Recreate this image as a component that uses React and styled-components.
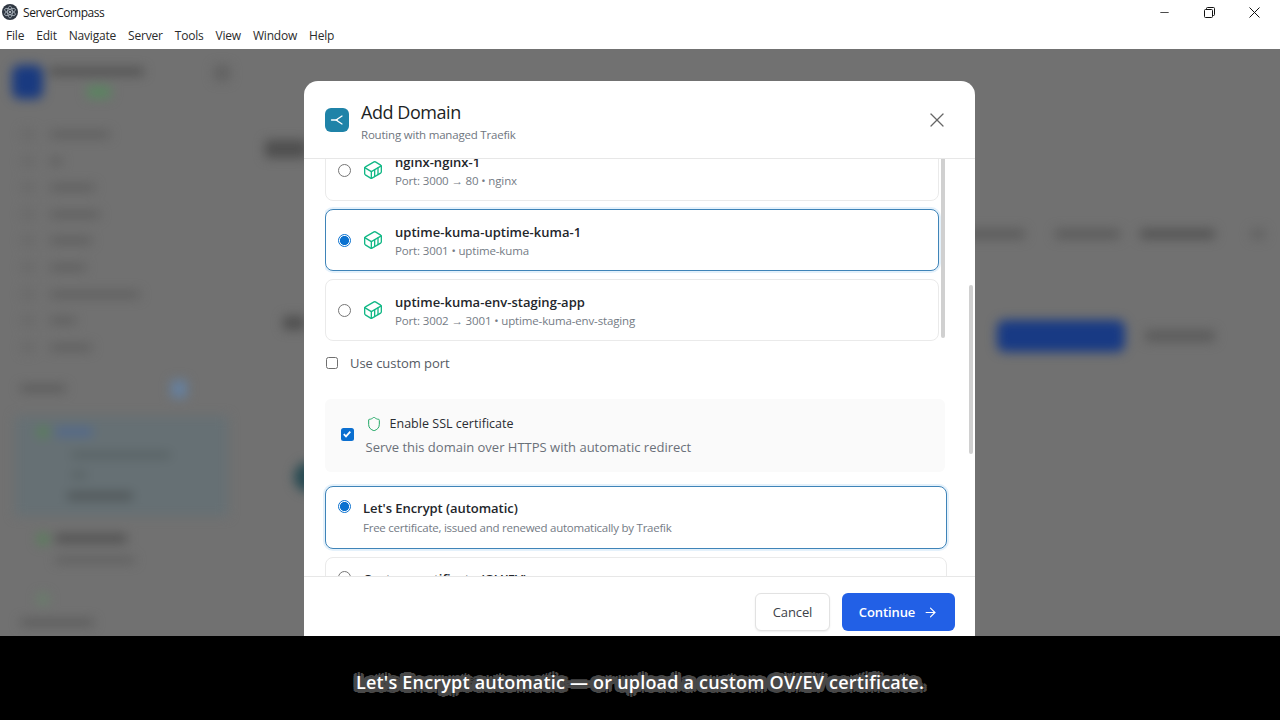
import React from 'react';
import styled, { createGlobalStyle } from 'styled-components';
import { Container, Shield, X, ArrowRight, Minus } from 'lucide-react';

const Global = createGlobalStyle`
  html, body { margin: 0; padding: 0; background: #000; }
  * { box-sizing: border-box; }
  body { font-family: "Open Sans", "Noto Sans", "Liberation Sans", sans-serif; }
`;

const Shell = styled.div`
  width: 1280px; height: 720px; display: flex; flex-direction: column; overflow: hidden; background: #fff;
`;
const TitleBar = styled.div`
  height: 24px; display: flex; align-items: center; padding-left: 2px; background: #fff;
  font-size: 12px; color: #1a1a1a;
`;
const AppName = styled.span`margin-left: 5px; letter-spacing: -.45px;`;
const WindowButtons = styled.div`margin-left: auto; display: flex; align-items: center; height: 24px; padding-right: 3px;`;
const WinBtn = styled.button`
  width: 45px; height: 24px; border: 0; background: none; padding: 0; display: flex; align-items: center; justify-content: center; color: #000;
`;
const MenuBar = styled.div`
  height: 25px; display: flex; align-items: center; padding-left: 6px; gap: 12px; background: #fff;
  font-size: 12px; color: #2b2b2b; letter-spacing: -.2px; padding-bottom: 2px;
`;
const Stage = styled.div`
  position: relative; height: 587px; overflow: hidden; background: #717171;
`;
const Backdrop = styled.div`
  display: flex; height: 100%; filter: blur(5.5px);
`;
const Sidebar = styled.div`
  width: 240px; padding: 16px 10px 0; display: flex; flex-direction: column;
`;
const Profile = styled.div`display: flex; gap: 6px; padding-left: 2px; height: 54px;`;
const Avatar = styled.div`width: 32px; height: 34px; border-radius: 8px; background: #193a80;`;
const ProfileText = styled.div`display: flex; flex-direction: column; gap: 11px; padding-top: 3px; width: 135px;`;
const Bar = styled.div`
  width: ${p => p.$w}px; height: ${p => p.$h || 7}px; border-radius: 3px; background: ${p => p.$c || '#5a5a5a'};
  margin-left: ${p => p.$ml || 0}px; flex: none;
`;
const NavList = styled.div`
  display: flex; flex-direction: column; gap: 15.6px; margin-top: 10px; padding-left: 12px;
`;
const NavRow = styled.div`display: flex; align-items: center; gap: 16px;`;
const SectionRow = styled.div`
  display: flex; align-items: center; margin-top: 27px; padding-left: 10px; gap: 105px;
`;
const ServerActive = styled.div`
  margin: 18px 2px 0 5px; height: 100px; background: #667074; padding: 10px 0 0 22px;
  display: flex; flex-direction: column; gap: 14px;
`;
const ServerRow = styled.div`display: flex; align-items: center; gap: 6px;`;
const Dot = styled.div`width: 12px; height: 12px; border-radius: 50%; background: ${p => p.$c || '#578059'};`;
const ServerOther = styled.div`
  margin: 17px 0 0 27px; display: flex; flex-direction: column; gap: 12px;
`;
const ThirdDot = styled.div`margin: 30px 0 0 27px;`;
const BottomRow = styled.div`margin: 14px 0 0 10px;`;
const MainArea = styled.div`
  flex: 1; padding: 52px 15px 0 22px; display: flex; flex-direction: column;
`;
const PageTitle = styled.div`
  width: 42px; height: 18px; border-radius: 3px; background: #4f4f4f; margin-top: 39px; margin-left: 3px;
`;
const TabsRow = styled.div`
  margin-top: 71px; display: flex; justify-content: flex-end;
`;
const ToolRow = styled.div`
  margin-top: 81px; display: flex; align-items: center; gap: 20px; padding-right: 50px;
`;
const HeadingBlur = styled.div`
  width: 22px; height: 14px; background: #505050; border-radius: 3px; margin: -26px auto 0 21px;
`;
const PrimaryBlur = styled.div`width: 128px; height: 32px; border-radius: 8px; background: #183a84;`;
const TealBlob = styled.div`
  width: 30px; height: 30px; border-radius: 50%; background: #274a52; margin: 110px 0 0 32px;
`;

const Modal = styled.div`
  position: absolute; left: 304px; top: 32px; width: 671px; height: 570px; background: #fff;
  border-radius: 14px 14px 0 0; display: flex; flex-direction: column; overflow: hidden;
`;
const Header = styled.div`
  height: 78px; flex: none; display: flex; align-items: center; padding: 0 26px 0 21px; border-bottom: 1px solid #e7e7e7;
`;
const HeaderIcon = styled.div`
  width: 24px; height: 24px; border-radius: 6px; background: #1f83a8; display: flex; align-items: center; justify-content: center;
`;
const HeaderText = styled.div`margin-left: 12px; display: flex; flex-direction: column; gap: 3px; margin-top: 3px;`;
const Title = styled.div`font-size: 18px; line-height: 24px; font-weight: 500; color: #1d1f24; letter-spacing: -.45px;`;
const Subtitle = styled.div`font-size: 11.5px; line-height: 16px; color: #6f7680; letter-spacing: -.2px;`;
const CloseBtn = styled.button`
  margin-left: auto; border: 0; background: none; padding: 0; color: #666; display: flex;
`;
const Body = styled.div`
  position: relative; flex: 1; overflow: hidden; padding: 0 28px 0 21px;
`;
const ListBox = styled.div`
  position: relative; height: 182px; overflow: hidden; padding-right: 8px;
`;
const List = styled.div`
  margin-top: -20px; display: flex; flex-direction: column; gap: 8px;
`;
const Card = styled.div`
  height: ${p => p.$h || 62}px; flex: none; border-radius: 8px; background: #fff; display: flex; align-items: center;
  padding-left: 12px;
  border: 1px solid ${p => (p.$on ? '#3f84b8' : '#eaeaea')};
  box-shadow: ${p => (p.$on ? '0 0 0 2px #e4f1fb' : 'none')};
`;
const Radio = styled.span`
  width: 13px; height: 13px; border-radius: 50%; flex: none; display: block; background: #fff;
  border: 1px solid ${p => (p.$on ? '#0b72d0' : '#767676')};
  ${p => p.$on && 'background: radial-gradient(circle, #0b72d0 0 4.3px, #fff 4.8px);'}
`;
const IconSlot = styled.span`display: flex; margin-left: 12px; color: #12b886;`;
const CardText = styled.div`margin-left: 12px; display: flex; flex-direction: column; gap: 3px; margin-top: 2px;`;
const CardTitle = styled.div`font-size: 13px; line-height: 16px; font-weight: 600; color: #23262b; letter-spacing: .03px;`;
const CardSub = styled.div`font-size: 11.5px; line-height: 16px; color: #747b85; letter-spacing: -.14px;`;
const ListThumb = styled.div`
  position: absolute; right: 2px; top: 0; bottom: 3px; width: 4px; background: #d0d0d0; border-radius: 0 0 2px 2px;
`;
const CustomPort = styled.label`
  display: flex; align-items: center; margin-top: 13px; height: 17px; font-size: 13px; color: #555b64; letter-spacing: -.05px;
`;
const Check = styled.span`
  width: ${p => p.$s || 12}px; height: ${p => p.$s || 12}px; border-radius: 2.5px; flex: none; display: flex; align-items: center; justify-content: center;
  border: ${p => (p.$on ? '0' : '1px solid #6f6f6f')}; background: ${p => (p.$on ? '#0b6fd0' : '#fff')}; margin-left: ${p => p.$ml || 1}px;
`;
const PortLabel = styled.span`margin-left: 12px;`;
const SslBlock = styled.div`
  margin-top: 28px; height: 73px; background: #fafafa; border-radius: 6px; display: flex; align-items: center; padding-left: 15px; width: 620px;
`;
const SslCheckWrap = styled.div`display: flex; margin-top: -3px;`;
const SslText = styled.div`margin: -1px 0 0 12px; display: flex; flex-direction: column; gap: 7px;`;
const SslHead = styled.div`
  display: flex; align-items: center; font-size: 12.5px; line-height: 16px; font-weight: 500; color: #2a2d33; letter-spacing: .02px;
`;
const ShieldSlot = styled.span`display: flex; color: #22a866; margin-right: 8px;`;
const SslDesc = styled.div`font-size: 13px; line-height: 16px; color: #6a7079; letter-spacing: 0;`;
const CertCard = styled(Card)`
  width: 622px; align-items: flex-start; padding: 13px 0 0 12px; margin-top: ${p => p.$mt}px;
`;
const CertText = styled.div`margin-left: 12px; display: flex; flex-direction: column; gap: 4px;`;
const CertTitle = styled.div`font-size: 13px; line-height: 16px; font-weight: 600; color: #23262b; letter-spacing: -.05px;`;
const CertSub = styled(CardSub)`letter-spacing: -.25px;`;
const PageThumb = styled.div`
  position: absolute; right: 2px; top: 126px; width: 4px; height: 169px; background: #d0d0d0; border-radius: 2px;
`;
const Footer = styled.div`
  height: 75px; flex: none; border-top: 1px solid #e7e7e7; display: flex; justify-content: flex-end; align-items: flex-start;
  gap: 12px; padding: 16px 20px 0 0;
`;
const CancelBtn = styled.button`
  height: 38px; width: 75px; border-radius: 6px; border: 1px solid #e2e2e2; background: #fff; font: 500 13px "Open Sans", sans-serif; color: #3d4249;
  box-shadow: 0 1px 2px rgba(0,0,0,.08); padding: 0; letter-spacing: -.1px;
`;
const ContinueBtn = styled.button`
  height: 38px; width: 113px; border-radius: 6px; border: 0; background: #2260e6; color: #fff; font: 600 13px "Open Sans", sans-serif;
  display: flex; align-items: center; justify-content: center; gap: 8px; padding: 0; letter-spacing: -.1px;
`;
const CaptionBar = styled.div`
  height: 84px; background: #000; display: flex; justify-content: center; padding-top: 34px; flex: none;
`;
const Caption = styled.span`
  font-size: 18px; line-height: 25px; height: 25px; font-weight: 600; color: #fff; letter-spacing: .2px;
  font-family: "Open Sans", sans-serif;
  text-shadow: 4px 0 0 #484848, -4px 0 0 #484848, 0 4px 0 #484848, 0 -4px 0 #484848,
    3px 3px 0 #484848, -3px 3px 0 #484848, 3px -3px 0 #484848, -3px -3px 0 #484848,
    2px 0 0 #484848, -2px 0 0 #484848, 0 2px 0 #484848, 0 -2px 0 #484848,
    4px 2px 0 #484848, -4px 2px 0 #484848, 4px -2px 0 #484848, -4px -2px 0 #484848;
`;

const Logo = () => (
  <svg width="16" height="16" viewBox="0 0 16 16" fill="none">
    <circle cx="8" cy="8" r="8" fill="#2f3742" />
    <g stroke="#b9c3cc" strokeWidth=".7">
      <ellipse cx="8" cy="8" rx="6" ry="2.4" transform="rotate(30 8 8)" />
      <ellipse cx="8" cy="8" rx="6" ry="2.4" transform="rotate(90 8 8)" />
      <ellipse cx="8" cy="8" rx="6" ry="2.4" transform="rotate(150 8 8)" />
    </g>
    <circle cx="8" cy="8" r="1" fill="#d5dce2" />
  </svg>
);

const RouteIcon = () => (
  <svg width="16" height="16" viewBox="0 0 16 16" fill="none" stroke="#fff" strokeWidth="1.3" strokeLinecap="round" strokeLinejoin="round">
    <path d="M2.5 8H8.5" />
    <path d="M13 4 7 8l6 4" />
  </svg>
);

const RestoreIcon = () => (
  <svg width="11" height="11" viewBox="0 0 11 11" fill="none" stroke="#111" strokeWidth="1">
    <rect x=".5" y="2.5" width="8" height="8" rx="1" />
    <path d="M2.5 2.5V1.5a1 1 0 0 1 1-1h6a1 1 0 0 1 1 1v6a1 1 0 0 1-1 1h-1" />
  </svg>
);

const CloseIcon = () => (
  <svg width="11" height="11" viewBox="0 0 11 11" stroke="#111" strokeWidth="1"><path d="M.5.5l10 10M10.5.5l-10 10" /></svg>
);

const TickIcon = () => (
  <svg width="10" height="10" viewBox="0 0 10 10" fill="none" stroke="#fff" strokeWidth="1.8"><path d="M1.8 5.2 4 7.4 8.3 2.6" /></svg>
);

const menus = ['File', 'Edit', 'Navigate', 'Server', 'Tools', 'View', 'Window', 'Help'];
const navWidths = [60, 12, 45, 50, 42, 36, 90, 26, 42];
const services = [
  { name: 'nginx-nginx-1', port: 'Port: 3000 → 80 • nginx' },
  { name: 'uptime-kuma-uptime-kuma-1', port: 'Port: 3001 • uptime-kuma', on: true },
  { name: 'uptime-kuma-env-staging-app', port: 'Port: 3002 → 3001 • uptime-kuma-env-staging' },
];

export default function App() {
  return (
    <Shell>
      <Global />
      <TitleBar>
        <Logo />
        <AppName>ServerCompass</AppName>
        <WindowButtons>
          <WinBtn><Minus size={13} strokeWidth={1.3} /></WinBtn>
          <WinBtn><RestoreIcon /></WinBtn>
          <WinBtn><CloseIcon /></WinBtn>
        </WindowButtons>
      </TitleBar>
      <MenuBar>{menus.map(m => <span key={m}>{m}</span>)}</MenuBar>
      <Stage>
        <Backdrop>
          <Sidebar>
            <Profile>
              <Avatar />
              <ProfileText>
                <Bar $w={95} $c="#4e4e4e" />
                <Bar $w={24} $h={12} $c="#5a8560" $ml={38} />
              </ProfileText>
              <Bar $w={16} $h={16} $c="#626262" $ml={28} />
            </Profile>
            <NavList>
              {navWidths.map((w, i) => (
                <NavRow key={i}>
                  <Bar $w={12} $h={11} $c="#696969" />
                  <Bar $w={w} $c="#5e5e5e" />
                </NavRow>
              ))}
            </NavList>
            <SectionRow>
              <Bar $w={46} $c="#5a5a5a" />
              <Bar $w={16} $h={18} $c="#66809e" />
            </SectionRow>
            <ServerActive>
              <ServerRow><Dot /><Bar $w={38} $h={10} $c="#546a8a" /></ServerRow>
              <Bar $w={100} $h={6} $c="#566062" $ml={34} />
              <Bar $w={16} $h={6} $c="#566062" $ml={34} />
              <Bar $w={66} $h={8} $c="#4f5658" $ml={30} />
            </ServerActive>
            <ServerOther>
              <ServerRow><Dot /><Bar $w={72} $h={9} $c="#525252" /></ServerRow>
              <Bar $w={80} $h={6} $c="#5e5e5e" $ml={18} />
            </ServerOther>
            <ThirdDot><Dot $c="#68806a" /></ThirdDot>
            <BottomRow><Bar $w={74} $c="#5a5a5a" /></BottomRow>
          </Sidebar>
          <MainArea>
            <PageTitle />
            <TabsRow>
              <Bar $w={60} $h={10} $c="#5c5c5c" />
              <Bar $w={65} $h={10} $c="#5c5c5c" $ml={30} />
              <Bar $w={75} $h={10} $c="#545454" $ml={20} />
              <Bar $w={14} $h={10} $c="#626262" $ml={36} />
            </TabsRow>
            <ToolRow>
              <HeadingBlur />
              <PrimaryBlur />
              <Bar $w={70} $h={12} $c="#5c5c5c" />
            </ToolRow>
            <TealBlob />
          </MainArea>
        </Backdrop>
        <Modal>
          <Header>
            <HeaderIcon><RouteIcon /></HeaderIcon>
            <HeaderText>
              <Title>Add Domain</Title>
              <Subtitle>Routing with managed Traefik</Subtitle>
            </HeaderText>
            <CloseBtn><X size={24} strokeWidth={1.25} /></CloseBtn>
          </Header>
          <Body>
            <ListBox>
              <List>
                {services.map(s => (
                  <Card key={s.name} $on={s.on}>
                    <Radio $on={s.on} />
                    <IconSlot><Container size={20} strokeWidth={1.6} /></IconSlot>
                    <CardText>
                      <CardTitle>{s.name}</CardTitle>
                      <CardSub>{s.port}</CardSub>
                    </CardText>
                  </Card>
                ))}
              </List>
              <ListThumb />
            </ListBox>
            <CustomPort>
              <Check />
              <PortLabel>Use custom port</PortLabel>
            </CustomPort>
            <SslBlock>
              <SslCheckWrap><Check $on $s={13} $ml={0.5}><TickIcon /></Check></SslCheckWrap>
              <SslText>
                <SslHead>
                  <ShieldSlot><Shield size={16} strokeWidth={1.5} /></ShieldSlot>
                  Enable SSL certificate
                </SslHead>
                <SslDesc>Serve this domain over HTTPS with automatic redirect</SslDesc>
              </SslText>
            </SslBlock>
            <CertCard $on $h={63} $mt={14}>
              <Radio $on />
              <CertText>
                <CertTitle>Let's Encrypt (automatic)</CertTitle>
                <CertSub>Free certificate, issued and renewed automatically by Traefik</CertSub>
              </CertText>
            </CertCard>
            <CertCard $h={63} $mt={8}>
              <Radio />
              <CertText>
                <CertTitle>Custom certificate (OV/EV)</CertTitle>
              </CertText>
            </CertCard>
            <PageThumb />
          </Body>
          <Footer>
            <CancelBtn>Cancel</CancelBtn>
            <ContinueBtn>Continue <ArrowRight size={15} strokeWidth={1.8} /></ContinueBtn>
          </Footer>
        </Modal>
      </Stage>
      <CaptionBar>
        <Caption>Let's Encrypt automatic — or upload a custom OV/EV certificate.</Caption>
      </CaptionBar>
    </Shell>
  );
}
